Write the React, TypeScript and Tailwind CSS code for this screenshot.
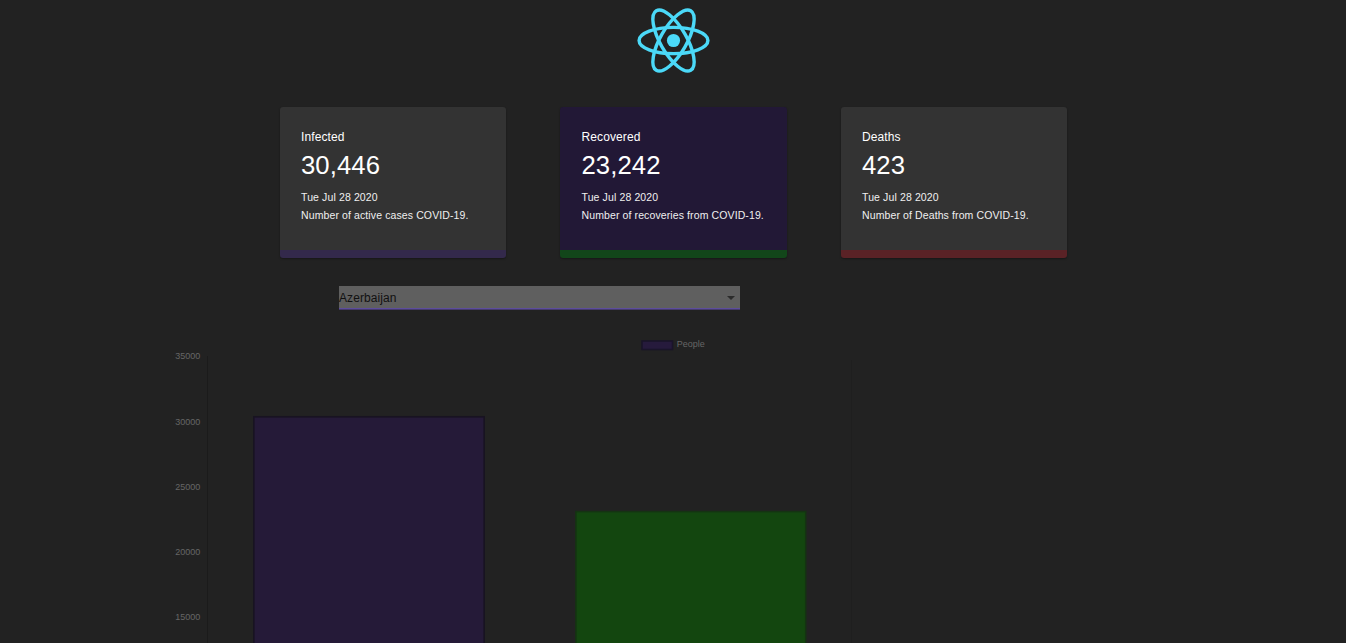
const cards = [
  {
    title: 'Infected',
    value: '30,446',
    note: 'Number of active cases COVID-19.',
    style: 'w-[226px] pl-[21px] bg-[#333333] border-[#33294b]',
  },
  {
    title: 'Recovered',
    value: '23,242',
    note: 'Number of recoveries from COVID-19.',
    style: 'w-[227px] pl-[21.5px] bg-[#221836] border-[#12461a]',
  },
  {
    title: 'Deaths',
    value: '423',
    note: 'Number of Deaths from COVID-19.',
    style: 'w-[226px] pl-[21px] bg-[#333333] border-[#5a2226]',
  },
];

const ticks = [
  { value: 35000, y: 359 },
  { value: 30000, y: 425 },
  { value: 25000, y: 490 },
  { value: 20000, y: 555 },
  { value: 15000, y: 620 },
];

function Logo() {
  return (
    <svg className="h-16 w-[72px] overflow-visible" viewBox="-11.66 -10.39 23 20.46">
      <circle r="2.1" fill="#4bd9f8" />
      <g stroke="#4bd9f8" strokeWidth="1.1" fill="none">
        <ellipse rx="11" ry="4.2" />
        <ellipse rx="11" ry="4.2" transform="rotate(60)" />
        <ellipse rx="11" ry="4.2" transform="rotate(120)" />
      </g>
    </svg>
  );
}

function Chart() {
  return (
    <svg className="block h-[307px] w-full" viewBox="0 336 1346 307" fontFamily="Liberation Sans, Arial, sans-serif" fontSize="9" fill="#666666">
      <rect x="642" y="341" width="30.5" height="8.5" fill="#261a3c" stroke="#1a1429" strokeWidth="1.6" />
      <text x="676.8" y="347">People</text>
      {ticks.map((tick) => (
        <text key={tick.value} x="200.2" y={tick.y} textAnchor="end">
          {tick.value}
        </text>
      ))}
      <path d="M207.5 356V643" stroke="#1b1b1b" />
      <path d="M851.5 360V643" stroke="#1f1f1f" />
      <rect x="253.8" y="416.8" width="230.4" height="240" fill="#251a38" stroke="#181321" strokeWidth="1.6" />
      <rect x="575.9" y="511.6" width="229.8" height="150" fill="#13460f" stroke="#143312" strokeWidth="1.6" />
    </svg>
  );
}

export default function App() {
  return (
    <div className="flex h-[643px] flex-col overflow-hidden bg-[#222222] font-['Liberation_Sans',Arial,sans-serif]">
      <header className="flex justify-center pt-2">
        <Logo />
      </header>
      <main className="flex flex-1 flex-col">
        <section className="mt-[35px] ml-[280px] flex gap-[54px]">
          {cards.map((card) => (
            <article
              key={card.title}
              className={`flex h-[151px] flex-col rounded-[3px] border-b-8 pt-[21px] whitespace-nowrap text-white shadow-[0_1px_2px_rgba(0,0,0,0.35)] ${card.style}`}
            >
              <h2 className="text-[12px] leading-[18px] tracking-[0.1px]">{card.title}</h2>
              <p className="mt-[2px] text-[25.7px] leading-[34px] tracking-[0.08px]">{card.value}</p>
              <p className="mt-[6px] text-[10.5px] leading-[18px] tracking-[0.12px] text-[#f0f0f0]">Tue Jul 28 2020</p>
              <p className="text-[10.5px] leading-[18px] tracking-[0.11px] text-[#f0f0f0]">{card.note}</p>
            </article>
          ))}
        </section>
        <button className="mt-7 ml-[339px] flex h-6 w-[401px] items-center justify-between bg-[#5f5f5f] pr-[5px] text-[12px] tracking-[0.08px] text-[#111111] shadow-[inset_0_-1px_0_#453a6c,inset_0_-2px_0_#5d4d9c]">
          <span>Azerbaijan</span>
          <svg className="h-1 w-2" viewBox="0 0 8 4">
            <path d="M0 0H8L4 4Z" fill="#2b2b2b" />
          </svg>
        </button>
        <div className="mt-[26px]">
          <Chart />
        </div>
      </main>
    </div>
  );
}
